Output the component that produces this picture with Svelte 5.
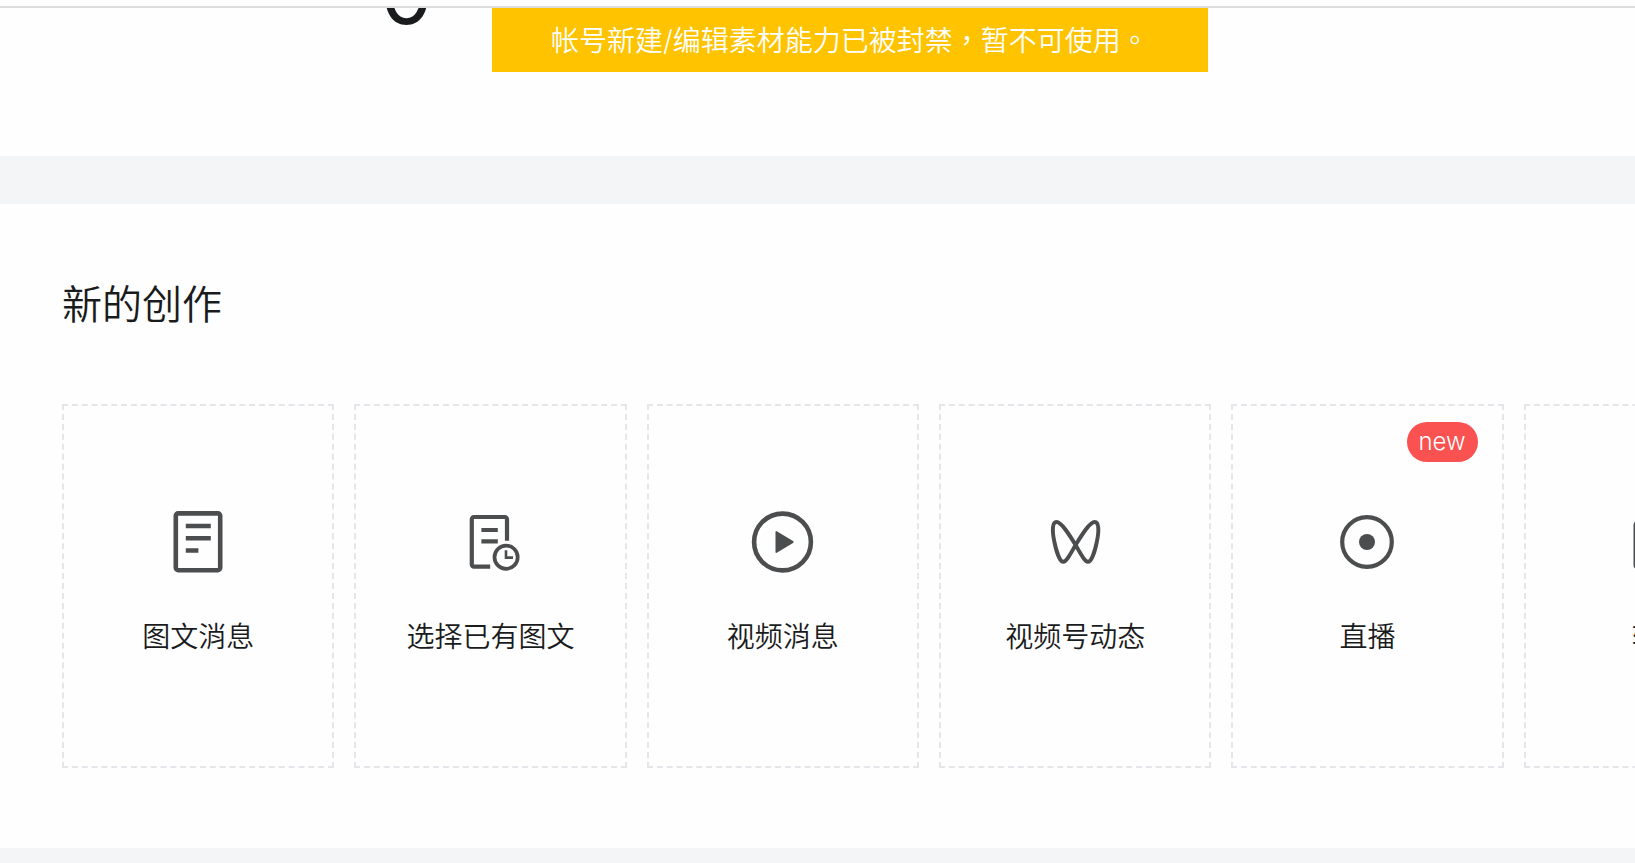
<script>
const notice = '帐号新建/编辑素材能力已被封禁，暂不可使用。';
const total = 0;

const entries = [
    { icon: 'article', label: '图文消息' },
    { icon: 'history', label: '选择已有图文' },
    { icon: 'video', label: '视频消息' },
    { icon: 'channels', label: '视频号动态' },
    { icon: 'live', label: '直播', badge: 'new' },
    { icon: 'reprint', label: '转载' },
];
</script>

<div class="page">
    <header class="topbar"></header>

    <section class="overview">
        <span class="total">{total}</span>
        <p class="notice">{notice}</p>
    </section>

    <section class="creation">
        <h2 class="title">新的创作</h2>
        <div class="entries">
            {#each entries as entry}
                <button class="entry" type="button">
                    <svg class="icon" viewBox="0 0 64 64" aria-hidden="true">
                        {#if entry.icon === 'article'}
                            <rect class="line" x="9.8" y="3.4" width="44.4" height="56.8" rx="2.4" stroke-width="4.6" />
                            <path class="line" d="M19.8 16H44.8M19.8 28.3H44.8M19.8 40.5H32.4" stroke-width="4.4" />
                        {:else if entry.icon === 'history'}
                            <path class="line" d="M49 30.8V9.2A2.2 2.2 0 0 0 46.8 7H16A2.2 2.2 0 0 0 13.8 9.2V54.4A2.2 2.2 0 0 0 16 56.6H32.2" stroke-width="4.2" />
                            <path class="line" d="M23.4 20H39.8M23.4 31.3H39.8" stroke-width="4.2" />
                            <circle class="line" cx="48.1" cy="47.2" r="11.6" stroke-width="3.7" />
                            <path class="line" d="M48 40.3V47.6H55" stroke-width="2.6" />
                        {:else if entry.icon === 'video'}
                            <circle class="line" cx="31.5" cy="32" r="28.4" stroke-width="4.6" />
                            <path class="fill" d="M24.5 22.3Q24.5 20.4 26.2 21.4L42 31Q43.5 32 42 33L26.2 42.6Q24.5 43.6 24.5 41.7Z" />
                        {:else if entry.icon === 'channels'}
                            <path class="line" d="M32.6 35C26.5 25 18.5 12 13.5 12C9 12 9.2 21.5 11.3 31.5C13.2 41 16.8 51.8 20.2 51.8C23.6 51.8 28.2 42.5 32.6 35C38.7 25 46.7 12 51.7 12C56.2 12 56 21.5 53.9 31.5C52 41 48.4 51.8 45 51.8C41.6 51.8 37 42.5 32.6 35Z" stroke-width="3.9" />
                        {:else if entry.icon === 'live'}
                            <circle class="line" cx="32" cy="32" r="24.8" stroke-width="4.2" />
                            <circle class="fill" cx="32" cy="32" r="8" />
                        {:else}
                            <rect class="line" x="7.6" y="12" width="48.8" height="46" rx="3" stroke-width="4.2" />
                            <path class="line" d="M20 35H43M34 26L43 35L34 44" stroke-width="4.2" />
                        {/if}
                    </svg>
                    <span class="label">{entry.label}</span>
                    {#if entry.badge}
                        <span class="badge">{entry.badge}</span>
                    {/if}
                </button>
            {/each}
        </div>
    </section>
</div>

<style>
:global(body) {
    background: #f4f5f7;
}

.page {
    overflow: hidden;

    color: #1a1b1c;
    font-family: Inter, "Noto Sans CJK TC", sans-serif;
    font-weight: 350;
}

.topbar {
    height: 6px;

    border-bottom: 2px solid #dcdddd;
    background: #fefefe;
}

.overview {
    display: flex;
    align-items: flex-start;
    height: 148px;
    padding-left: 380px;
    overflow: hidden;

    background: #fefefe;
}

.total {
    width: 112px;
    margin-top: -70px;

    font-size: 84px;
    font-weight: 400;
    line-height: 112px;
}

.notice {
    margin: 0;
    padding: 13px 59px 11px;

    color: #fff;
    font-size: 28px;
    line-height: 40px;
    white-space: nowrap;

    background: #ffc300;
}

.creation {
    margin: 48px 0 16px;
    padding: 73px 0 80px 62px;

    background: #fefefe;
}

.title {
    margin: 0 0 71px;

    font-size: 40px;
    font-weight: 350;
    line-height: 56px;
}

/* the last entry runs past the right edge of the page */
.entries {
    display: grid;
    grid-template-columns: repeat(6, 1fr);
    gap: 20px;
    margin-right: -161px;
}

.entry {
    position: relative;

    display: flex;
    flex-direction: column;
    align-items: center;
    gap: 43px;
    box-sizing: border-box;
    min-height: 364px;
    padding: 104px 0 0;

    color: inherit;
    font: inherit;

    border: 2px dashed #e6e6ea;
    background: transparent;
    cursor: pointer;
}

.icon {
    width: 64px;
    height: 64px;
}

.line {
    fill: none;
    stroke: #4c4d4e;
}

.fill {
    fill: #4c4d4e;
}

.label {
    font-size: 28px;
    line-height: 40px;
    white-space: nowrap;
}

.badge {
    position: absolute;
    top: 16px;
    right: 24px;

    padding: 0 12px;

    color: #fff;
    font-size: 24px;
    line-height: 40px;

    border-radius: 20px;
    background: #fa5151;
}
</style>
